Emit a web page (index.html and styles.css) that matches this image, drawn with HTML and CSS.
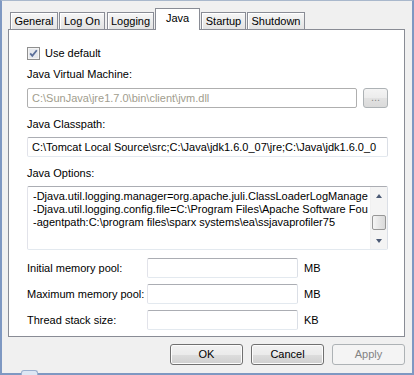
FILE: index.html
```html
<!DOCTYPE html>
<html lang="en">
<head>
  <meta charset="UTF-8">
  <title>Tomcat Properties - Java</title>
  <link rel="stylesheet" href="styles.css">
</head>
<body>
  <div class="window">
    <div class="tabs">
      <div class="tab tab-general">General</div>
      <div class="tab tab-logon">Log On</div>
      <div class="tab tab-logging">Logging</div>
      <div class="tab tab-active">Java</div>
      <div class="tab tab-startup">Startup</div>
      <div class="tab tab-shutdown">Shutdown</div>
    </div>

    <div class="panel">
      <div class="check-row">
        <span class="checkbox">
          <svg width="13" height="13" viewBox="0 0 13 13">
            <rect x="0.5" y="0.5" width="12" height="12" fill="#f4f4f4" stroke="#8f8f8f"/>
            <rect x="2" y="2" width="9" height="9" fill="#e6e9ee"/>
            <path d="M3.2 6.4 L5.3 8.8 L9.8 3.2" fill="none" stroke="#5b6f9a" stroke-width="1.8"/>
          </svg>
        </span>
        <span>Use default</span>
      </div>

      <div class="field-label label-first">Java Virtual Machine:</div>
      <div class="jvm-row">
        <div class="input input-disabled">C:\SunJava\jre1.7.0\bin\client\jvm.dll</div>
        <div class="browse">...</div>
      </div>

      <div class="field-label">Java Classpath:</div>
      <div class="input">C:\Tomcat Local Source\src;C:\Java\jdk1.6.0_07\jre;C:\Java\jdk1.6.0_0</div>

      <div class="field-label">Java Options:</div>
      <div class="options">
        <div class="options-text">
          <div>-Djava.util.logging.manager=org.apache.juli.ClassLoaderLogManage</div>
          <div>-Djava.util.logging.config.file=C:\Program Files\Apache Software Fou</div>
          <div>-agentpath:C:\program files\sparx systems\ea\ssjavaprofiler75</div>
        </div>
        <div class="scrollbar">
          <div class="sb-btn"><span class="arrow-up"></span></div>
          <div class="sb-track"><div class="sb-thumb"></div></div>
          <div class="sb-btn"><span class="arrow-down"></span></div>
        </div>
      </div>

      <div class="mem-row mem-first">
        <span class="mem-label">Initial memory pool:</span>
        <div class="input mem-input"></div>
        <span class="unit">MB</span>
      </div>
      <div class="mem-row">
        <span class="mem-label">Maximum memory pool:</span>
        <div class="input mem-input"></div>
        <span class="unit">MB</span>
      </div>
      <div class="mem-row">
        <span class="mem-label">Thread stack size:</span>
        <div class="input mem-input"></div>
        <span class="unit">KB</span>
      </div>
    </div>

    <div class="buttons">
      <div class="btn">OK</div>
      <div class="btn">Cancel</div>
      <div class="btn btn-disabled">Apply</div>
    </div>

    <div class="grip"></div>
  </div>
</body>
</html>
```

FILE: styles.css
```css
* { margin: 0; padding: 0; box-sizing: border-box; }
body { font-family: 'Liberation Sans', Arial, sans-serif; font-size: 11px; color: #000; background: #fff; }

.window { position: relative; width: 414px; height: 375px; background: #f0f0f0; border: 2px solid #7e98c2; border-top: 1px solid #a9b8cc; border-bottom-width: 2px; padding: 7px 7px 0 6px; }

/* tabs */
.tabs { display: flex; align-items: flex-end; height: 21px; margin-left: 2px; }
.tab { height: 17px; line-height: 16px; text-align: center; border: 1px solid #898c95; border-bottom: none; background: linear-gradient(#f6f6f6, #e3e3e3); box-shadow: inset 1px 1px 0 #fff; white-space: nowrap; }
.tab + .tab { margin-left: 1px; }
.tab-general { width: 48px; }
.tab-logon { width: 46px; }
.tab-logging { width: 47px; margin-left: 2px !important; }
.tab-startup { width: 45px; }
.tab-shutdown { width: 58px; }
.tab-active { position: relative; z-index: 1; width: 45px; height: 22px; margin-bottom: -1px; line-height: 18px; background: #fff; box-shadow: none; }
.tab-active + .tab { margin-left: 1px; }

/* page panel */
.panel { height: 308px; border: 1px solid #898c95; background: #fff; padding: 16px 16px 0 18px; }
.check-row { display: flex; align-items: center; height: 14px; }
.checkbox { display: block; width: 13px; height: 13px; margin-right: 5px; }
.checkbox svg { display: block; }

.field-label { line-height: 14px; margin-top: 9px; margin-bottom: 6px; }
.label-first { margin-top: 7px; margin-bottom: 7px; }

.input { height: 20px; line-height: 18px; padding: 0 4px; border: 1px solid #abadb3; border-left-color: #e2e3ea; border-right-color: #dbdfe6; border-bottom-color: #e3e9ef; border-radius: 2px; background: #fff; white-space: nowrap; overflow: hidden; }
.input-disabled { border-color: #afafaf; color: #a19d8e; }
.jvm-row { display: flex; gap: 6px; }
.jvm-row .input { flex: 1; }
.browse { width: 25px; height: 20px; line-height: 16px; text-align: center; color: #8d8d8d; border: 1px solid #adb2b5; border-radius: 3px; background: linear-gradient(#f4f4f4, #ececec 50%, #e2e2e2 51%, #dadada); }

/* java options box */
.options { display: flex; height: 64px; margin-top: 5px; border: 1px solid #abadb3; border-left-color: #e2e3ea; border-right-color: #dbdfe6; border-bottom-color: #e3e9ef; border-radius: 2px; }
.options-text { flex: 1; padding: 3px 0 0 5px; line-height: 13px; white-space: nowrap; overflow: hidden; }
.scrollbar { display: flex; flex-direction: column; width: 17px; background: #f4f4f4; border-left: 1px solid #f0f0f0; }
.sb-btn { height: 17px; display: flex; align-items: center; justify-content: center; }
.arrow-up { width: 0; height: 0; border-left: 3.5px solid transparent; border-right: 3.5px solid transparent; border-bottom: 4px solid #4b5a75; }
.arrow-down { width: 0; height: 0; border-left: 3.5px solid transparent; border-right: 3.5px solid transparent; border-top: 4px solid #4b5a75; }
.sb-track { flex: 1; padding-top: 11px; }
.sb-thumb { height: 15px; margin: 0 1px; border: 1px solid #979797; border-radius: 2px; background: linear-gradient(90deg, #f5f5f5, #e6e6e6 50%, #d9d9d9); }

/* memory settings */
.mem-row { display: flex; align-items: center; margin-top: 6px; }
.mem-first { margin-top: 8px; }
.mem-label { width: 120px; }
.mem-input { width: 151px; }
.unit { margin-left: 6px; }

/* dialog buttons */
.buttons { display: flex; justify-content: flex-end; gap: 8px; margin-top: 7px; }
.btn { width: 73px; height: 21px; line-height: 19px; text-align: center; border: 1px solid #707070; border-radius: 3px; background: linear-gradient(#f2f2f2, #ebebeb 50%, #dddddd 51%, #cfcfcf); box-shadow: inset 0 0 0 1px #fcfcfc; }
.btn-disabled { color: #838383; border-color: #adb2b5; background: #f4f4f4; box-shadow: none; }

.grip { position: absolute; left: 19px; bottom: -2px; width: 17px; height: 5px; border: 1px solid #9bb0cf; border-bottom: none; border-radius: 3px 3px 0 0; background: #dde7f4; }
```
